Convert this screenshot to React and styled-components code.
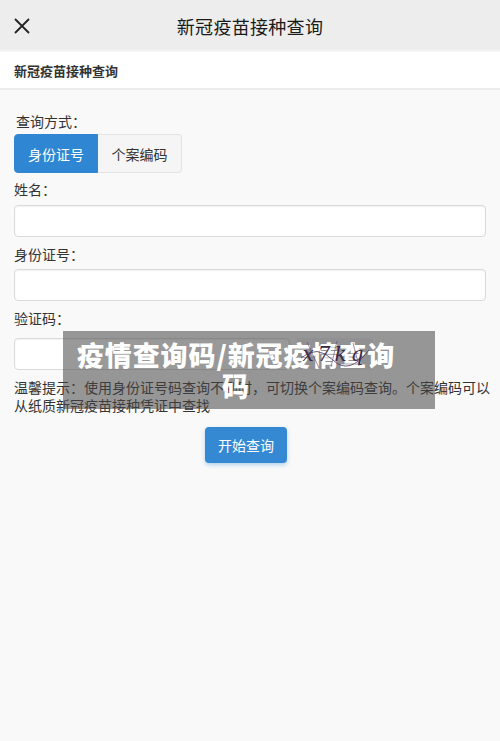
import React from "react";
import styled, { createGlobalStyle } from "styled-components";

const Global = createGlobalStyle`
  html, body { margin: 0; padding: 0; background: #f9f9f9; }
  body { font-family: "Noto Sans CJK SC", "Noto Sans", sans-serif; color: #333; }
  * { box-sizing: border-box; }
`;

const Page = styled.div`
  width: 500px;
  min-height: 741px;
  background: #f9f9f9;
  position: relative;
`;

const TopBar = styled.div`
  height: 52px;
  background: #ededed;
  border-bottom: 2px solid #f4f4f4;
  display: flex;
  align-items: center;
  justify-content: center;
  position: relative;
`;

const CloseBtn = styled.div`
  position: absolute;
  left: 13px;
  top: 17px;
  width: 18px;
  height: 18px;
  display: flex;
`;

const Title = styled.div`
  font-size: 18px;
  color: #1a1a1a;
  letter-spacing: 0.3px;
  margin-top: 2px;
`;

const Header = styled.div`
  height: 38px;
  background: #fff;
  border-bottom: 2px solid #ececec;
  display: flex;
  align-items: center;
  padding-left: 14px;
  font-size: 13px;
  font-weight: bold;
  color: #333;
`;

const Body = styled.div`
  padding: 21px 14px 0 14px;
  display: flex;
  flex-direction: column;
`;

const Label = styled.div`
  font-size: 14px;
  line-height: 20px;
  color: #333;
  padding-left: ${(p) => (p.$indent ? "2px" : "0")};
  margin-top: ${(p) => p.$mt || 0}px;
`;

const Segmented = styled.div`
  display: flex;
  margin-top: 3px;
`;

const Seg = styled.div`
  width: 84px;
  height: 39px;
  display: flex;
  align-items: center;
  justify-content: center;
  font-size: 14px;
  background: ${(p) => (p.$active ? "#2f86d2" : "#f5f5f5")};
  color: ${(p) => (p.$active ? "#fff" : "#333")};
  border: 1px solid ${(p) => (p.$active ? "#2f86d2" : "#e3e3e3")};
  border-radius: ${(p) => (p.$active ? "4px 0 0 4px" : "0 4px 4px 0")};
  border-left-width: ${(p) => (p.$active ? "1px" : "0")};
`;

const Input = styled.div`
  height: 32px;
  width: ${(p) => p.$w || "472px"};
  background: #fff;
  border: 1px solid #dadada;
  border-radius: 4px;
  box-shadow: inset 0 1px 2px rgba(0, 0, 0, 0.06);
  margin-top: ${(p) => p.$mt || 0}px;
`;

const CaptchaRow = styled.div`
  display: flex;
  align-items: center;
  gap: 7px;
  margin-top: 10px;
`;

const Captcha = styled.div`
  width: 76px;
  height: 32px;
  background: #eeeaf0;
  position: relative;
  display: flex;
  align-items: center;
  justify-content: center;
  overflow: hidden;
`;

const CaptchaText = styled.span`
  font-family: "DejaVu Serif", serif;
  font-size: 20px;
  font-style: italic;
  color: #3b2a4a;
  letter-spacing: 4px;
  position: relative;
  z-index: 1;
`;

const Noise = styled.svg`
  position: absolute;
  inset: 0;
  z-index: 2;
`;

const Hint = styled.div`
  font-size: 14px;
  line-height: 18px;
  color: #333;
  margin-top: 8px;
  margin-right: -8px;
`;

const BtnWrap = styled.div`
  display: flex;
  justify-content: center;
  padding-right: 8px;
  margin-top: 13px;
`;

const PrimaryBtn = styled.div`
  width: 82px;
  height: 36px;
  background: #3589d3;
  color: #fff;
  border-radius: 4px;
  display: flex;
  align-items: center;
  justify-content: center;
  font-size: 14px;
  box-shadow: 0 2px 4px rgba(53, 137, 211, 0.35);
`;

const Overlay = styled.div`
  position: absolute;
  left: 63px;
  top: 331px;
  width: 372px;
  height: 78px;
  background: rgba(70, 70, 70, 0.55);
  padding: 8px 36px 8px 10px;
  color: #fff;
  font-size: 27px;
  font-weight: 900;
  line-height: 31px;
  letter-spacing: 0.9px;
  text-align: center;
`;

export default function App() {
  return (
    <Page>
      <Global />
      <TopBar>
        <CloseBtn>
          <svg width="18" height="18" viewBox="0 0 18 18">
            <path d="M2 2 L16 16 M16 2 L2 16" stroke="#222" strokeWidth="1.8" fill="none" />
          </svg>
        </CloseBtn>
        <Title>新冠疫苗接种查询</Title>
      </TopBar>
      <Header>新冠疫苗接种查询</Header>
      <Body>
        <Label $indent>查询方式：</Label>
        <Segmented>
          <Seg $active>身份证号</Seg>
          <Seg>个案编码</Seg>
        </Segmented>
        <Label $mt={6}>姓名：</Label>
        <Input $mt={6} />
        <Label $mt={7}>身份证号：</Label>
        <Input $mt={5} />
        <Label $mt={7}>验证码：</Label>
        <CaptchaRow>
          <Input $w="276px" />
          <Captcha>
            <CaptchaText>x7kq</CaptchaText>
            <Noise width="76" height="32" viewBox="0 0 76 32">
              <path d="M4 20 Q20 6 36 22 T72 12" stroke="#4a3560" strokeWidth="0.8" fill="none" />
              <path d="M10 4 L22 30 M40 3 L34 29 M56 5 L62 28" stroke="#5b4470" strokeWidth="0.6" fill="none" />
            </Noise>
          </Captcha>
        </CaptchaRow>
        <Hint>
          温馨提示：使用身份证号码查询不到时，可切换个案编码查询。个案编码可以从纸质新冠疫苗接种凭证中查找
        </Hint>
        <BtnWrap>
          <PrimaryBtn>开始查询</PrimaryBtn>
        </BtnWrap>
      </Body>
      <Overlay>疫情查询码/新冠疫情查询码</Overlay>
    </Page>
  );
}
